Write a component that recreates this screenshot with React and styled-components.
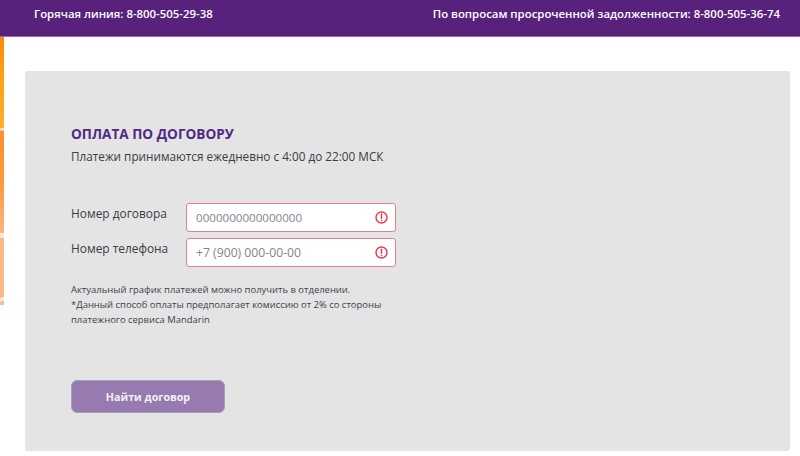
import * as React from "react";
import styled, { createGlobalStyle } from "styled-components";

const GlobalStyle = createGlobalStyle`
  html, body {
    margin: 0;
    padding: 0;
    background: #fff;
    font-family: "Open Sans", "Liberation Sans", sans-serif;
  }
  * { box-sizing: border-box; }
`;

const Page = styled.div`
  width: 800px;
  height: 456px;
  overflow: hidden;
  display: flex;
  flex-direction: column;
`;

const TopBar = styled.header`
  height: 37px;
  flex: none;
  background: #58227c;
  border-bottom: 1px solid #8d6ea6;
  color: #fff;
  font-size: 11.4px;
  font-weight: 600;
  display: flex;
  align-items: flex-start;
  justify-content: space-between;
  padding: 6px 20px 0 34px;
  line-height: 16px;
`;

const Body = styled.div`
  flex: 1;
  display: flex;
  align-items: flex-start;
`;

const Strip = styled.div`
  width: 4px;
  height: 268px;
  flex: none;
  background:
    linear-gradient(170deg, transparent 0 73%, #ffffffb0 73% 75%, transparent 75% 97%, #ffffffb0 97% 98.5%, transparent 98.5%),
    linear-gradient(180deg, #ff8a0c 0, #ffa41e 20%, #ffb02c 34%, #ffe8c8 34% 34.8%, #ff8f2a 35%, #ff9a3e 55%, #ffb684 74%, #ffb98c 100%);
`;

const Card = styled.main`
  margin: 34px 0 0 21px;
  width: 765px;
  height: 380px;
  background: #e4e4e4;
  border-radius: 2px;
  padding: 53px 0 0 46px;
  display: flex;
  flex-direction: column;
  align-items: flex-start;
`;

const Title = styled.h1`
  margin: 0;
  color: #4f2a84;
  font-size: 13.6px;
  font-weight: 700;
  line-height: 19px;
`;

const Subtitle = styled.p`
  margin: 4px 0 0;
  color: #3c3c46;
  font-size: 11.75px;
  line-height: 18px;
`;

const Form = styled.div`
  margin-top: 38px;
  display: grid;
  grid-template-columns: 115px 210px;
  row-gap: 6px;
`;

const FieldLabel = styled.label`
  color: #3c3c46;
  font-size: 11.9px;
  line-height: 18px;
  padding-top: 1px;
`;

const InputBox = styled.div`
  height: 29px;
  background: #fff;
  border: 1px solid #e8808c;
  border-radius: 3px;
  display: flex;
  align-items: center;
  justify-content: space-between;
  padding: 0 7px 0 9px;
`;

const Input = styled.input`
  border: 0;
  outline: 0;
  padding: 0;
  width: 170px;
  background: transparent;
  font-family: inherit;
  font-size: ${(p) => p.$size}px;
  &::placeholder {
    color: #7d8790;
    opacity: 1;
  }
`;

const Notes = styled.p`
  margin: 15px 0 0;
  width: 330px;
  color: #3d3d4c;
  font-size: 9.45px;
  line-height: 15px;
`;

const SubmitButton = styled.button`
  margin-top: 53px;
  width: 154px;
  height: 33px;
  background: #967ab0;
  border: 1px solid #a8a0b4;
  border-radius: 6px;
  color: #f4f0f7;
  font-family: inherit;
  font-size: 10.7px;
  font-weight: 700;
  cursor: pointer;
`;

const AlertIcon = () => (
  <svg width="13" height="13" viewBox="0 0 13 13" fill="none" stroke="#e5384f" strokeWidth="1.4">
    <circle cx="6.5" cy="6.5" r="5.5" />
    <path d="M6.5 3.2v4" strokeLinecap="round" />
    <path d="M6.5 9.2v.4" strokeLinecap="round" />
  </svg>
);

export default function App() {
  return (
    <>
      <GlobalStyle />
      <Page>
        <TopBar>
          <span>Горячая линия: 8-800-505-29-38</span>
          <span>По вопросам просроченной задолженности: 8-800-505-36-74</span>
        </TopBar>
        <Body>
          <Strip />
          <Card>
            <Title>ОПЛАТА ПО ДОГОВОРУ</Title>
            <Subtitle>Платежи принимаются ежедневно с 4:00 до 22:00 МСК</Subtitle>
            <Form>
              <FieldLabel>Номер договора</FieldLabel>
              <InputBox>
                <Input $size={11.6} placeholder="0000000000000000" />
                <AlertIcon />
              </InputBox>
              <FieldLabel>Номер телефона</FieldLabel>
              <InputBox>
                <Input $size={12.2} placeholder="+7 (900) 000-00-00" />
                <AlertIcon />
              </InputBox>
            </Form>
            <Notes>
              Актуальный график платежей можно получить в отделении.
              <br />
              *Данный способ оплаты предполагает комиссию от 2% со стороны платежного сервиса Mandarin
            </Notes>
            <SubmitButton>Найти договор</SubmitButton>
          </Card>
        </Body>
      </Page>
    </>
  );
}
